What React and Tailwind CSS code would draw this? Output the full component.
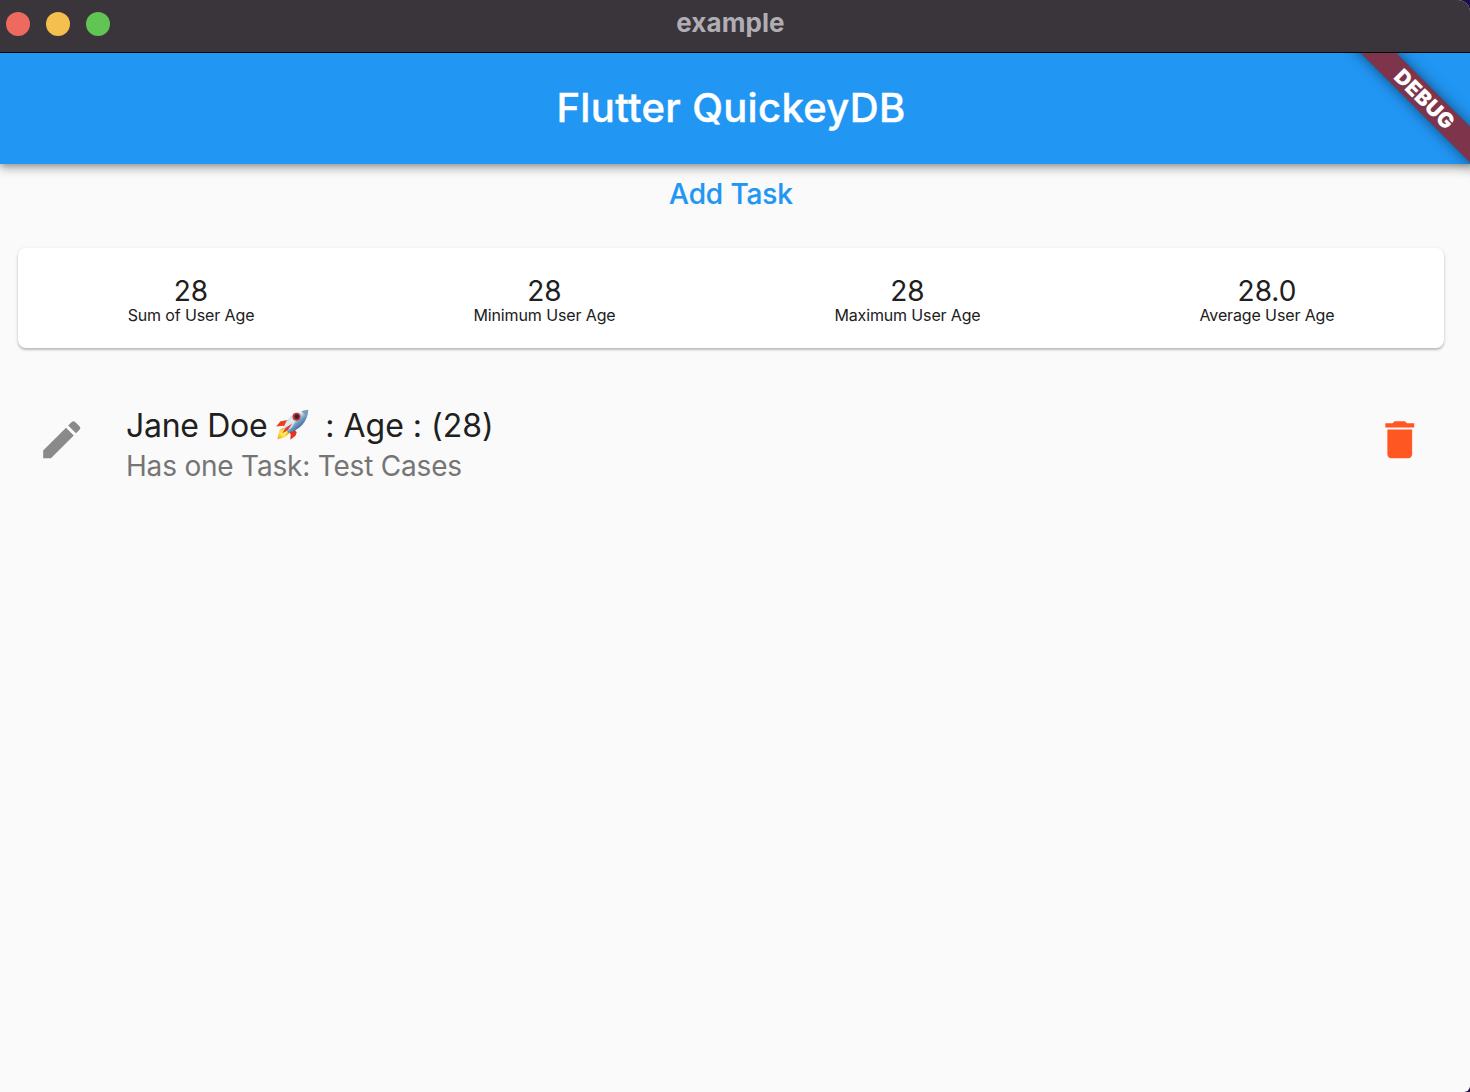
const stats = [
  { value: "28", label: "Sum of User Age", box: "w-[127px]", track: "tracking-[-0.13px]" },
  { value: "28", label: "Minimum User Age", box: "w-[142px]", track: "tracking-[-0.12px]" },
  { value: "28", label: "Maximum User Age", box: "w-[146px]", track: "tracking-[-0.15px]" },
  { value: "28.0", label: "Average User Age", box: "w-[135px]", track: "tracking-[-0.13px]" },
];

function Rocket() {
  return (
    <svg role="img" aria-label="rocket" viewBox="0 0 34 34" className="h-[34px] w-[34px] shrink-0">
      <defs>
        <linearGradient id="hull" x1="12" y1="8" x2="24" y2="22" gradientUnits="userSpaceOnUse">
          <stop offset="0" stopColor="#b9d3e6" />
          <stop offset="0.35" stopColor="#e3edf4" />
          <stop offset="0.65" stopColor="#6f9fc6" />
          <stop offset="1" stopColor="#35618e" />
        </linearGradient>
        <linearGradient id="flame" x1="3" y1="31" x2="12" y2="21" gradientUnits="userSpaceOnUse">
          <stop offset="0" stopColor="#f9a51b" />
          <stop offset="0.5" stopColor="#ffe94a" />
          <stop offset="1" stopColor="#f58a1e" />
        </linearGradient>
      </defs>
      <path d="M13 12 5.5 13.2 1.2 18.5l6.5-.8 3 1z" fill="#ef3a24" />
      <path d="m19.5 21.5 2.2 2.7-1.2 3.6-5.2 4 .4-5.4-1.5-2.7z" fill="#e93220" />
      <path d="M9 19.5 4.5 21.4l-2.2 10 8.5-2.6 4.2-4z" fill="url(#flame)" />
      <path d="M10.5 20c-3 1-4.5 3.5-4.7 7.5 3.8-.6 6.4-2 7.4-4.7z" fill="#fff06a" />
      <path d="M8.7 20.2C10.5 11.5 18 3.6 33.2 1.8 33 13.2 24.8 21.7 14 25.1z" fill="url(#hull)" />
      <path d="M26.5 3.2c2.2-.7 4.4-1.1 6.7-1.4-.1 3-.8 5.7-2 8-1-2.9-2.5-4.9-4.7-6.6z" fill="#7a9dbd" />
      <path d="M13.5 16.8 23 9l-6.5 11-4.8 3.3-1.9-2z" fill="#f4f8fa" opacity=".65" />
      <path d="m17.2 15.6-6.5 4.2-3.7 5.8 5.8-3.4z" fill="#e63b2b" />
      <circle cx="21.5" cy="8.8" r="4" fill="#cf3034" />
      <circle cx="21.8" cy="8.6" r="2.3" fill="#292832" />
    </svg>
  );
}

export default function App() {
  return (
    <div className="flex h-[1092px] w-[1470px] flex-col overflow-hidden bg-[#1d0a4c] font-['Inter','Liberation_Sans',sans-serif]">
      <div className="flex h-full flex-col overflow-hidden rounded-tr-[12px] rounded-br-[6px] bg-[#fafafa]">
        <header className="flex h-[53px] shrink-0 items-center border-b border-black bg-[#39353b] pb-[4px] pl-[6px]">
          <div className="flex gap-4">
            <span className="h-6 w-6 rounded-full bg-[#ee6a5f]" />
            <span className="h-6 w-6 rounded-full bg-[#f5bf4f]" />
            <span className="h-6 w-6 rounded-full bg-[#61c554]" />
          </div>
          <h1 className="mr-[10px] flex-1 pr-[109px] pb-[2px] text-center text-[26px] leading-[32px] font-bold tracking-[0.1px] text-[#b1adb4]">
            example
          </h1>
        </header>

        <div className="relative flex flex-1 flex-col overflow-hidden">
          <div className="flex h-[111px] shrink-0 items-center justify-center bg-[#2196f3] pr-[8px] pb-[2px] shadow-[0_4px_10px_rgba(0,0,0,0.32),0_1px_6px_rgba(0,0,0,0.2)]">
            <h2 className="text-[40px] leading-[48px] font-medium tracking-[0.33px] text-white [-webkit-text-stroke:0.4px_white]">
              Flutter QuickeyDB
            </h2>
          </div>
          <div className="absolute top-[33.5px] left-[1334.5px] flex h-[25px] w-[180px] rotate-45 items-center justify-center bg-[#7e344a] pr-[1px] text-[21px] leading-none font-black tracking-[0.4px] text-white shadow-[0_0_14px_rgba(0,0,0,0.5)]">
            DEBUG
          </div>

          <button className="mt-[12px] mb-px h-[36px] self-center pr-[8px] text-[28px] leading-[36px] font-medium tracking-[-0.1px] text-[#2196f3] [-webkit-text-stroke:0.2px_#2196f3]">
            Add Task
          </button>

          <section className="mt-[35px] mr-[26px] ml-[18px] flex h-[100px] shrink-0 justify-around rounded-[8px] bg-white pt-[27px] text-[#202020] shadow-[0_2px_2px_rgba(0,0,0,0.18),0_1px_4px_rgba(0,0,0,0.12)]">
            {stats.map((s) => (
              <div key={s.label} className={`flex flex-col items-center whitespace-nowrap ${s.box}`}>
                <span className="text-[28px] leading-[32px]">{s.value}</span>
                <span className={`-mt-px text-[16px] leading-[18px] ${s.track}`}>{s.label}</span>
              </div>
            ))}
          </section>

          <section className="mt-[56px] flex items-start pr-[45.5px] pl-[37px]">
            <svg viewBox="0 0 24 24" className="mt-[11px] h-[49.5px] w-[49.5px] fill-[#8a8a8a]">
              <path d="M3 17.25V21h3.75L17.81 9.94l-3.75-3.75L3 17.25zM20.71 7.04c.39-.39.39-1.02 0-1.41l-2.34-2.34c-.39-.39-1.02-.39-1.41 0l-1.83 1.83 3.75 3.75 1.83-1.83z" />
            </svg>
            <div className="ml-[39.5px] flex-1 whitespace-nowrap">
              <div className="flex h-[42px] items-center text-[32px] leading-[42px] text-[#202020]">
                <span className="mt-px tracking-[-0.3px]">Jane Doe</span>
                <span className="ml-[7.5px] flex">
                  <Rocket />
                </span>
                <span className="mt-px ml-[16.5px] tracking-[-0.02px]">: Age : (28)</span>
              </div>
              <div className="text-[28px] leading-[40px] tracking-[-0.2px] text-[#757575]">Has one Task: Test Cases</div>
            </div>
            <svg viewBox="0 0 24 24" className="mt-[11px] h-[49.5px] w-[49.5px] fill-[#ff5722]">
              <path d="M6 19c0 1.1.9 2 2 2h8c1.1 0 2-.9 2-2V7H6v12zM19 4h-3.5l-1-1h-5l-1 1H5v2h14V4z" />
            </svg>
          </section>
        </div>
      </div>
    </div>
  );
}
